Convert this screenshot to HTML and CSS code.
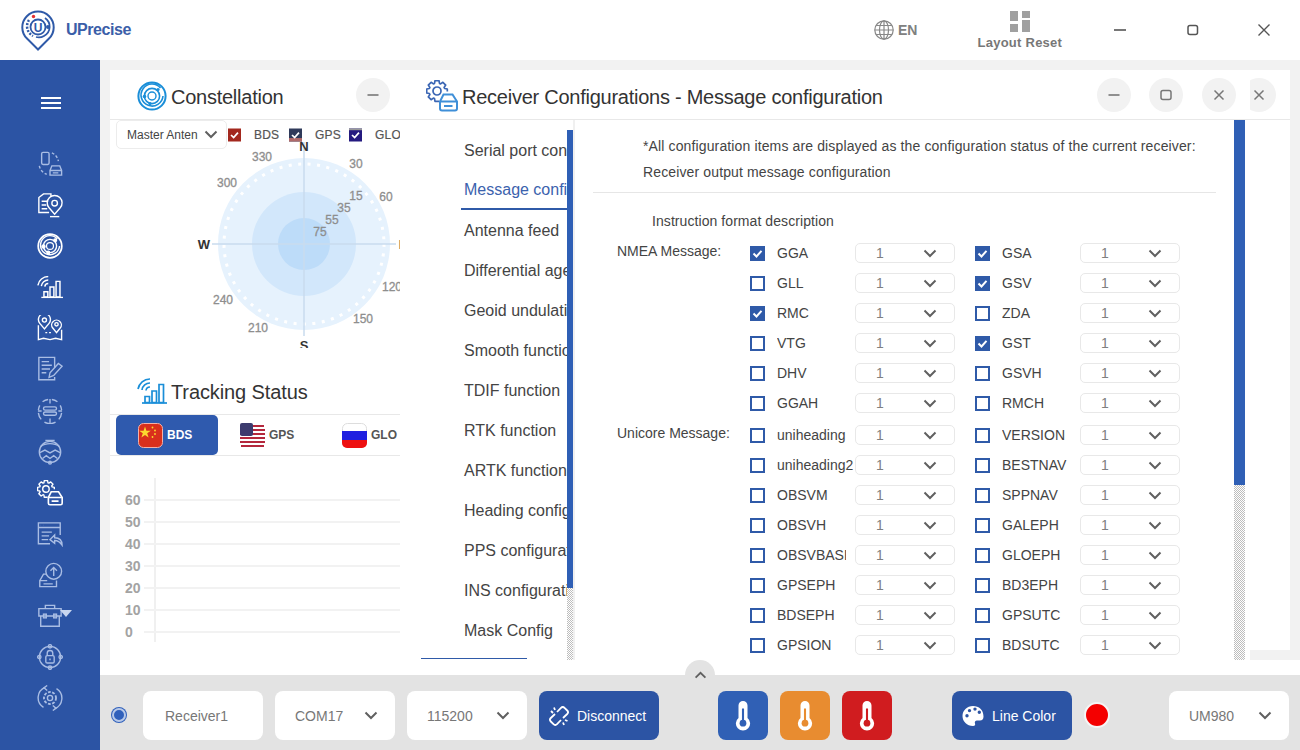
FILE: index.html
```html
<!DOCTYPE html>
<html lang="en">
<head>
<meta charset="utf-8">
<title>UPrecise</title>
<link rel="stylesheet" href="styles.css">
</head>
<body>
<svg class="defs" width="0" height="0" aria-hidden="true">
  <symbol id="chev" viewBox="0 0 14 9"><path d="M1.500 1.500 7 7l5.500-5.500" fill="none" stroke="currentColor" stroke-width="2"/></symbol>
  <symbol id="tick" viewBox="0 0 15 15"><path d="M3.500 7.500 6.500 10.500 11.500 4.800" fill="none" stroke="#fff" stroke-width="2"/></symbol>
  <symbol id="orbit" viewBox="0 0 30 30"><g fill="none" stroke="currentColor"><circle cx="15" cy="15" r="13.600" stroke-width="2"/><path d="M23.500 7A11 11 0 1 0 26 15" stroke-width="1.600"/><circle cx="15" cy="15" r="7.600" stroke-width="1.600"/><circle cx="15" cy="15" r="4" stroke-width="1.400"/></g><circle cx="7.500" cy="15.500" r="1.800" fill="currentColor"/><circle cx="21" cy="8.500" r="1.600" fill="currentColor"/><circle cx="13" cy="22.600" r="1.600" fill="currentColor"/></symbol>
  <symbol id="signal" viewBox="0 0 30 26"><g fill="none" stroke="currentColor" stroke-width="1.700"><path d="M1 11A12 12 0 0 1 13 1"/><path d="M5 12A8 8 0 0 1 13 5"/><path d="M9 12.500A4 4 0 0 1 13 9"/><path d="M8 18.500h4.500v6H8zM15 13h4.500v11.500H15zM22 6.500h4.500v18H22z"/><path d="M5 25h25"/></g></symbol>
  <symbol id="gearbox" viewBox="0 0 32 32">
    <path fill="none" stroke="currentColor" stroke-width="1.700" stroke-linejoin="round" d="M13 21.300H9L8.500 18.600 7.400 18.100 5.100 19.700 2.300 16.900 3.900 14.600 3.400 13.500.7 13V9L3.400 8.500 3.900 7.400 2.300 5.100 5.100 2.300 7.400 3.900 8.500 3.400 9 .7H13L13.500 3.400 14.600 3.900 16.900 2.300 19.700 5.100 18.100 7.400 18.600 8.500 21.300 9V11.500"/>
    <circle cx="11" cy="11" r="4" fill="none" stroke="currentColor" stroke-width="1.700"/>
    <path d="M14 21.500l3.500-7h9l4.500 7v7a2 2 0 0 1-2 2H16a2 2 0 0 1-2-2z" fill="none" stroke="var(--acc, currentColor)" stroke-width="2"/>
    <path d="M14.500 21.500h16M18 26h8.500" stroke="var(--acc, currentColor)" stroke-width="2"/>
  </symbol>
  <symbol id="thermo" viewBox="0 0 24 40"><path d="M6 6a6 6 0 0 1 12 0v16.500a9.500 9.500 0 1 1-12 0z" fill="#fff"/><path d="M12 10v19" stroke="var(--t)" stroke-width="2.800"/><circle cx="12" cy="29.500" r="4.500" fill="var(--t)"/></symbol>
</svg>

<div class="app">
  <header class="top">
    <svg class="logo" viewBox="0 0 34 41" aria-hidden="true">
      <path d="M17 39.500 6 28.500A15.700 15.700 0 1 1 28 28.500z" fill="none" stroke="#2f5aa8" stroke-width="2"/>
      <path d="M8 10A11 11 0 0 0 12 26" fill="none" stroke="#2f5aa8" stroke-width="2.500" stroke-dasharray="2 1.500"/>
      <path d="M24 8A10.500 10.500 0 0 1 23 26 10.500 10.500 0 0 1 15 27" fill="none" stroke="#2f5aa8" stroke-width="1.800"/>
      <circle cx="17" cy="17" r="7.500" fill="none" stroke="#2f5aa8" stroke-width="1.800"/>
      <text x="17" y="21.500" class="logo-u">U</text>
      <circle cx="12.500" cy="6.500" r="1.700" fill="#e53030"/>
      <circle cx="27" cy="17" r="2" fill="#2f5aa8"/>
    </svg>
    <span class="brand">UPrecise</span>
    <div class="lang">
      <svg class="globe" viewBox="0 0 20 20" aria-hidden="true"><g fill="none" stroke="#888" stroke-width="1.200"><circle cx="10" cy="10" r="9.200"/><ellipse cx="10" cy="10" rx="4.500" ry="9.200"/><path d="M10 .8v18.400M.8 10h18.400M2 5.500h16M2 14.500h16"/></g></svg>
      <span>EN</span>
    </div>
    <div class="reset">
      <svg class="reset-icon" viewBox="0 0 20 21" aria-hidden="true"><path d="M0 0h8v10H0zM12 0h8v7h-8zM0 13h8v8H0zM12 9h8v12h-8z" fill="#a0a0a0"/></svg>
      <span>Layout Reset</span>
    </div>
    <div class="win">
      <svg viewBox="0 0 14 14" aria-hidden="true"><path d="M1 7h12" stroke="#555" stroke-width="1.600"/></svg>
      <svg viewBox="0 0 14 14" aria-hidden="true"><rect x="2" y="2.500" width="9.500" height="9" rx="2" fill="none" stroke="#555" stroke-width="1.500"/></svg>
      <svg viewBox="0 0 14 14" aria-hidden="true"><path d="M1.500 1.500l11 11m0-11l-11 11" stroke="#555" stroke-width="1.400"/></svg>
    </div>
  </header>

  <nav class="side">
    <div class="burger"><i></i><i></i><i></i></div>
    <svg class="ico dim" viewBox="0 0 28 28" aria-hidden="true"><rect x="5" y="1.500" width="8" height="13" rx="1.500"/><path d="M16 2a12 12 0 0 1 7 9" stroke-dasharray="3 2"/><path d="M2.500 16a12 12 0 0 0 8 9" stroke-dasharray="3 2"/><path d="M14 21l2-5h8.500l2 5v5h-12.500zM14 21h12.500M17 23.500h6"/></svg>
    <svg class="ico" viewBox="0 0 28 28" aria-hidden="true"><path d="M13 22H2V6l5-4h8v3"/><path d="M5 10h7M5 14h5M5 18h6"/><path d="M19 24l-6-7a8 8 0 1 1 12 0z"/><circle cx="19" cy="12" r="3"/><path d="M14 26.500h10"/></svg>
    <svg class="ico" viewBox="0 0 30 30" aria-hidden="true"><use href="#orbit"/></svg>
    <svg class="ico" viewBox="0 0 30 26" aria-hidden="true"><use href="#signal"/></svg>
    <svg class="ico" viewBox="0 0 28 28" aria-hidden="true"><path d="M8 15l-5-6a6.500 6.500 0 1 1 10 0z"/><circle cx="8" cy="5.500" r="2.200"/><path d="M21 19l-4-5a5.200 5.200 0 1 1 8 0z"/><circle cx="21" cy="10" r="1.800"/><path d="M1.500 11v15.500L7 25l7 1.500L20 25l6.500 1.500V16"/><path d="M9 19h8" stroke-dasharray="2 2"/></svg>
    <svg class="ico dim" viewBox="0 0 28 28" aria-hidden="true"><path d="M19 13V1.500H2v24h17v-3"/><path d="M5 6h8M5 10h11M5 14h9M5 18h5"/><path d="M13 23l1-5 9-10 4 3-9 10z"/></svg>
    <svg class="ico dim" viewBox="0 0 28 28" aria-hidden="true"><path d="M6 4a12.500 12.500 0 0 1 6-2.400M16 1.600A12.500 12.500 0 0 1 22 4M25 8a12.500 12.500 0 0 1 1.500 5M26.500 16a12.500 12.500 0 0 1-3 7M20 26a12.500 12.500 0 0 1-12 0M4.500 23a12.500 12.500 0 0 1-3-7M1.500 13A12.500 12.500 0 0 1 3 8"/><path d="M14 1v5M14 22v5M1 14h4M23 14h4"/><rect x="7" y="9.500" width="14" height="3.500" rx="1.700"/><rect x="7" y="15" width="14" height="3.500" rx="1.700"/></svg>
    <svg class="ico dim" viewBox="0 0 28 28" aria-hidden="true"><circle cx="14" cy="14" r="11.500"/><path d="M4 8c5-4 15-4 20 0M2.500 15l6-3 5.500 3 5.500-3 6 3M6 21l4-3 4 3 4-3 4 3M9 1.500h10"/><circle cx="14" cy="25.500" r="1.500"/></svg>
    <svg class="ico" viewBox="0 0 32 32" aria-hidden="true"><use href="#gearbox"/></svg>
    <svg class="ico dim" viewBox="0 0 28 28" aria-hidden="true"><path d="M25 15V2H1.500v22.500H14"/><path d="M1.500 7H25M4 4.500h.1M7 4.500h.1M5 12h11M5 16h8M5 20h7"/><path d="M27 26c0-5-3-8-8-8v-3l-5 5 5 4v-3c3 0 6 2 8 5z"/></svg>
    <svg class="ico dim" viewBox="0 0 28 28" aria-hidden="true"><circle cx="18" cy="10" r="8.500"/><path d="M18 15V6M14.500 9.500 18 6l3.500 3.500"/><path d="M10 13H7l-4 7v6.500h18V20"/><path d="M3 20h8M7 23.500h10"/></svg>
    <div class="tool">
      <svg class="ico dim" viewBox="0 0 28 28" aria-hidden="true"><path d="M9 6V2.500h10V6M2 6h24v8H2zM4 14v11h20V14"/><rect x="7" y="12" width="3" height="4"/><rect x="18" y="12" width="3" height="4"/></svg>
      <i class="tool-caret"></i>
    </div>
    <svg class="ico dim" viewBox="0 0 28 28" aria-hidden="true"><circle cx="14" cy="14" r="11.500"/><circle cx="14" cy="2.500" r="1.800"/><circle cx="14" cy="25.500" r="1.800"/><circle cx="2.500" cy="14" r="1.800"/><circle cx="25.500" cy="14" r="1.800"/><rect x="9.500" y="12.500" width="9" height="8" rx="1.500"/><path d="M11 12.500V10a3 3 0 0 1 6 0v2.500M14 15.500v2"/></svg>
    <svg class="ico dim" viewBox="0 0 28 28" aria-hidden="true"><path d="M9 2.500A12 12 0 0 0 7 24"/><path d="M19 25.500A12 12 0 0 0 21 4"/><path d="M11 .5 7.500 3 11 6M17 22l3.500 3-3.500 2.500"/><circle cx="14" cy="14" r="2.800"/><circle cx="14" cy="14" r="6.500" stroke-dasharray="3 1.600" stroke-width="2"/></svg>
  </nav>

  <main class="main">
    <div class="work">
    <div class="dock">
      <div class="panel">
        <section class="left">
          <div class="head">
            <svg class="head-ico blue" viewBox="0 0 30 30" aria-hidden="true"><use href="#orbit"/></svg>
            <h2>Constellation</h2>
            <button class="circle c-min" type="button" aria-label="Minimize"><svg viewBox="0 0 14 14"><path d="M1.500 7h11" stroke="#777" stroke-width="1.600"/></svg></button>
          </div>
          <div class="toolbar">
            <div class="ant"><span>Master Anten</span><svg class="chev" aria-hidden="true"><use href="#chev"/></svg></div>
            <div class="legend w61"><svg class="lbox" viewBox="0 0 15 15" aria-hidden="true"><rect width="15" height="15" fill="#a3281e"/><use href="#tick"/></svg><span>BDS</span></div>
            <div class="legend w60"><svg class="lbox" viewBox="0 0 15 15" aria-hidden="true"><rect width="15" height="15" fill="#2f3a5a"/><rect y="11" width="15" height="4" fill="#b06a6a"/><use href="#tick"/></svg><span>GPS</span></div>
            <div class="legend"><svg class="lbox" viewBox="0 0 15 15" aria-hidden="true"><rect width="15" height="15" fill="#241a80"/><rect width="15" height="2" fill="#999"/><use href="#tick"/></svg><span>GLO</span></div>
          </div>
          <svg class="radar" viewBox="110 135 290 213" aria-hidden="true">
            <circle cx="304" cy="244" r="86" fill="#e6f2fd"/>
            <circle cx="304" cy="244" r="80" fill="none" stroke="#fff" stroke-width="3" stroke-dasharray="3 6.500"/>
            <circle cx="304" cy="244" r="52" fill="#d2e7fb"/>
            <circle cx="304" cy="244" r="26" fill="#bddcf9"/>
            <path d="M304 142v194M212 244h184" stroke="#c9dcee" stroke-width="1.500"/>
            <g class="rdeg">
              <text x="262" y="161">330</text><text x="356" y="168">30</text><text x="227" y="187">300</text>
              <text x="356" y="200">15</text><text x="386" y="201">60</text><text x="344" y="212">35</text>
              <text x="332" y="224">55</text><text x="320" y="236">75</text><text x="223" y="304">240</text>
              <text x="392" y="291">120</text><text x="363" y="323">150</text><text x="258" y="332">210</text>
            </g>
            <g class="rdir"><text x="304" y="151">N</text><text x="204" y="249">W</text><text x="403" y="249">E</text><text x="304" y="350">S</text></g>
          </svg>
          <div class="head thead">
            <svg class="head-ico blue" viewBox="0 0 30 26" aria-hidden="true"><use href="#signal"/></svg>
            <h2>Tracking Status</h2>
          </div>
          <div class="tabs">
            <div class="tab on">
              <svg class="flag" viewBox="0 0 25 25" aria-hidden="true"><rect x=".5" y=".5" width="24" height="24" rx="5" fill="#d92f1c" stroke="#f3b0a8"/><path d="m7 3.500 1.400 4.200h4.400l-3.600 2.600 1.400 4.200L7 11.900l-3.600 2.600 1.400-4.200-3.600-2.600h4.400z" fill="#fbd92f"/><g fill="#fbd92f"><circle cx="14.500" cy="4.500" r=".9"/><circle cx="17" cy="7.500" r=".9"/><circle cx="17" cy="11" r=".9"/><circle cx="14.500" cy="14" r=".9"/></g></svg>
              <span>BDS</span>
            </div>
            <div class="tab">
              <svg class="flag" viewBox="0 0 25 25" aria-hidden="true"><rect width="25" height="25" rx="5" fill="#fff"/><path d="M1 3h23M0 7h25M0 11h25M0 15h25M0 19h25M1 23h23" stroke="#b4283c" stroke-width="2"/><rect width="13" height="13" rx="2" fill="#3c3b6e"/></svg>
              <span>GPS</span>
            </div>
            <div class="tab">
              <svg class="flag" viewBox="0 0 25 25" aria-hidden="true"><rect x=".5" y=".5" width="24" height="24" rx="5" fill="#fff" stroke="#ddd"/><rect y="8" width="25" height="9" fill="#1f1fe0"/><path d="M0 17h25v3a5 5 0 0 1-5 5H5a5 5 0 0 1-5-5z" fill="#ee1010"/></svg>
              <span>GLO</span>
            </div>
          </div>
          <svg class="chart" viewBox="110 456 290 203" aria-hidden="true">
            <path d="M155 478v164" stroke="#f0f0f0" stroke-width="2"/>
            <path d="M144 500h256M144 522h256M144 544h256M144 566h256M144 588h256M144 610h256M144 632h256" stroke="#f2f2f2" stroke-width="2"/>
            <g class="axis"><text x="125" y="505">60</text><text x="125" y="527">50</text><text x="125" y="549">40</text><text x="125" y="571">30</text><text x="125" y="593">20</text><text x="125" y="615">10</text><text x="125" y="637">0</text></g>
          </svg>
        </section>

        <section class="config">
          <div class="head chead">
            <svg class="cfg-ico" viewBox="0 0 32 32" aria-hidden="true"><use href="#gearbox"/></svg>
            <h2>Receiver Configurations - Message configuration</h2>
            <button class="circle" type="button" aria-label="Minimize"><svg viewBox="0 0 14 14"><path d="M1.500 7h11" stroke="#777" stroke-width="1.600"/></svg></button>
            <button class="circle" type="button" aria-label="Maximize"><svg viewBox="0 0 14 14"><rect x="2" y="2.500" width="10" height="9" rx="2" fill="none" stroke="#777" stroke-width="1.500"/></svg></button>
            <button class="circle" type="button" aria-label="Close"><svg viewBox="0 0 14 14"><path d="M2.500 2.500l9 9m0-9l-9 9" stroke="#777" stroke-width="1.500"/></svg></button>
            <div class="cut"><button class="circle" type="button" aria-label="Close"><svg viewBox="0 0 14 14"><path d="M2.500 2.500l9 9m0-9l-9 9" stroke="#777" stroke-width="1.500"/></svg></button></div>
          </div>
          <div class="cbody">
            <div class="cnav">
              <ul class="navlist">
                <li>Serial port configuration</li>
                <li class="on">Message configuration</li>
                <li>Antenna feed</li>
                <li>Differential age</li>
                <li>Geoid undulation</li>
                <li>Smooth function</li>
                <li>TDIF function</li>
                <li>RTK function</li>
                <li>ARTK function</li>
                <li>Heading configuration</li>
                <li>PPS configuration</li>
                <li>INS configuration</li>
                <li>Mask Config</li>
              </ul>
              <div class="hthumb"></div>
            </div>
            <div class="vbar navbar"><i class="pad"></i><i class="thumb nthumb"></i><i class="dither"></i></div>
            <div class="content">
              <p class="note">*All configuration items are displayed as the configuration status of the current receiver:</p>
              <p class="note">Receiver output message configuration</p>
              <hr class="rule">
              <p class="instr">Instruction format description</p>

              <div class="group">
                <div class="glabel">NMEA Message:</div>
                <div class="grid">
                  <div class="item"><span class="cb on"><svg viewBox="0 0 15 15" aria-hidden="true"><use href="#tick"/></svg></span><span class="name">GGA</span><span class="sel">1<svg class="chev" aria-hidden="true"><use href="#chev"/></svg></span></div>
                  <div class="item"><span class="cb on"><svg viewBox="0 0 15 15" aria-hidden="true"><use href="#tick"/></svg></span><span class="name">GSA</span><span class="sel">1<svg class="chev" aria-hidden="true"><use href="#chev"/></svg></span></div>
                  <div class="item"><span class="cb"></span><span class="name">GLL</span><span class="sel">1<svg class="chev" aria-hidden="true"><use href="#chev"/></svg></span></div>
                  <div class="item"><span class="cb on"><svg viewBox="0 0 15 15" aria-hidden="true"><use href="#tick"/></svg></span><span class="name">GSV</span><span class="sel">1<svg class="chev" aria-hidden="true"><use href="#chev"/></svg></span></div>
                  <div class="item"><span class="cb on"><svg viewBox="0 0 15 15" aria-hidden="true"><use href="#tick"/></svg></span><span class="name">RMC</span><span class="sel">1<svg class="chev" aria-hidden="true"><use href="#chev"/></svg></span></div>
                  <div class="item"><span class="cb"></span><span class="name">ZDA</span><span class="sel">1<svg class="chev" aria-hidden="true"><use href="#chev"/></svg></span></div>
                  <div class="item"><span class="cb"></span><span class="name">VTG</span><span class="sel">1<svg class="chev" aria-hidden="true"><use href="#chev"/></svg></span></div>
                  <div class="item"><span class="cb on"><svg viewBox="0 0 15 15" aria-hidden="true"><use href="#tick"/></svg></span><span class="name">GST</span><span class="sel">1<svg class="chev" aria-hidden="true"><use href="#chev"/></svg></span></div>
                  <div class="item"><span class="cb"></span><span class="name">DHV</span><span class="sel">1<svg class="chev" aria-hidden="true"><use href="#chev"/></svg></span></div>
                  <div class="item"><span class="cb"></span><span class="name">GSVH</span><span class="sel">1<svg class="chev" aria-hidden="true"><use href="#chev"/></svg></span></div>
                  <div class="item"><span class="cb"></span><span class="name">GGAH</span><span class="sel">1<svg class="chev" aria-hidden="true"><use href="#chev"/></svg></span></div>
                  <div class="item"><span class="cb"></span><span class="name">RMCH</span><span class="sel">1<svg class="chev" aria-hidden="true"><use href="#chev"/></svg></span></div>
                </div>
              </div>

              <div class="group g2">
                <div class="glabel">Unicore Message:</div>
                <div class="grid">
                  <div class="item"><span class="cb"></span><span class="name short">uniheading</span><span class="sel">1<svg class="chev" aria-hidden="true"><use href="#chev"/></svg></span></div>
                  <div class="item"><span class="cb"></span><span class="name">VERSION</span><span class="sel">1<svg class="chev" aria-hidden="true"><use href="#chev"/></svg></span></div>
                  <div class="item"><span class="cb"></span><span class="name">uniheading2</span><span class="sel">1<svg class="chev" aria-hidden="true"><use href="#chev"/></svg></span></div>
                  <div class="item"><span class="cb"></span><span class="name">BESTNAV</span><span class="sel">1<svg class="chev" aria-hidden="true"><use href="#chev"/></svg></span></div>
                  <div class="item"><span class="cb"></span><span class="name">OBSVM</span><span class="sel">1<svg class="chev" aria-hidden="true"><use href="#chev"/></svg></span></div>
                  <div class="item"><span class="cb"></span><span class="name">SPPNAV</span><span class="sel">1<svg class="chev" aria-hidden="true"><use href="#chev"/></svg></span></div>
                  <div class="item"><span class="cb"></span><span class="name">OBSVH</span><span class="sel">1<svg class="chev" aria-hidden="true"><use href="#chev"/></svg></span></div>
                  <div class="item"><span class="cb"></span><span class="name">GALEPH</span><span class="sel">1<svg class="chev" aria-hidden="true"><use href="#chev"/></svg></span></div>
                  <div class="item"><span class="cb"></span><span class="name short">OBSVBASE</span><span class="sel">1<svg class="chev" aria-hidden="true"><use href="#chev"/></svg></span></div>
                  <div class="item"><span class="cb"></span><span class="name">GLOEPH</span><span class="sel">1<svg class="chev" aria-hidden="true"><use href="#chev"/></svg></span></div>
                  <div class="item"><span class="cb"></span><span class="name">GPSEPH</span><span class="sel">1<svg class="chev" aria-hidden="true"><use href="#chev"/></svg></span></div>
                  <div class="item"><span class="cb"></span><span class="name">BD3EPH</span><span class="sel">1<svg class="chev" aria-hidden="true"><use href="#chev"/></svg></span></div>
                  <div class="item"><span class="cb"></span><span class="name">BDSEPH</span><span class="sel">1<svg class="chev" aria-hidden="true"><use href="#chev"/></svg></span></div>
                  <div class="item"><span class="cb"></span><span class="name">GPSUTC</span><span class="sel">1<svg class="chev" aria-hidden="true"><use href="#chev"/></svg></span></div>
                  <div class="item"><span class="cb"></span><span class="name">GPSION</span><span class="sel">1<svg class="chev" aria-hidden="true"><use href="#chev"/></svg></span></div>
                  <div class="item"><span class="cb"></span><span class="name">BDSUTC</span><span class="sel">1<svg class="chev" aria-hidden="true"><use href="#chev"/></svg></span></div>
                </div>
              </div>
            </div>
            <div class="vbar mainbar"><i class="thumb mthumb"></i><i class="dither"></i></div>
            <div class="blank"><i class="fill"></i><i class="strip"></i></div>
          </div>
        </section>
      </div>
    </div>
    </div>

    <footer class="bar">
      <div class="pull"><svg class="chev" aria-hidden="true"><use href="#chev"/></svg></div>
      <span class="radio"></span>
      <div class="box b-rec">Receiver1</div>
      <div class="box">COM17<svg class="chev" aria-hidden="true"><use href="#chev"/></svg></div>
      <div class="box">115200<svg class="chev" aria-hidden="true"><use href="#chev"/></svg></div>
      <button class="btn" type="button">
        <svg viewBox="0 0 20 20" aria-hidden="true"><g fill="none" stroke="#fff" stroke-width="1.800"><path d="M8 6l4-4.200a2.500 2.500 0 0 1 3.500 0l2.700 2.700a2.500 2.500 0 0 1 0 3.500L14 12"/><path d="M12 14l-4 4.200a2.500 2.500 0 0 1-3.500 0l-2.700-2.700a2.500 2.500 0 0 1 0-3.500L6 8"/><path d="M2 5l2 2M5 1.500l1 2.500M15 19l-1-2.500M18.500 15l-2.500-1"/></g></svg>
        Disconnect
      </button>
      <div class="temps">
        <span class="temp t-blue"><svg viewBox="0 0 24 40" aria-hidden="true"><use href="#thermo"/></svg></span>
        <span class="temp t-orange"><svg viewBox="0 0 24 40" aria-hidden="true"><use href="#thermo"/></svg></span>
        <span class="temp t-red"><svg viewBox="0 0 24 40" aria-hidden="true"><use href="#thermo"/></svg></span>
      </div>
      <button class="btn b-line" type="button">
        <svg viewBox="0 0 22 22" aria-hidden="true"><path fill-rule="evenodd" fill="#fff" d="M11 1C5 1 .5 5.500.5 11S5 21 11 21c2 0 2.500-1.300 2-2.500-.6-1.500.2-3 2-3h3c2.300 0 3.500-1.500 3.500-4C21.500 5 17 1 11 1zM5 12.500a1.700 1.700 0 1 1 0-3.400 1.700 1.700 0 0 1 0 3.400zM7.500 7.300a1.700 1.700 0 1 1 0-3.400 1.700 1.700 0 0 1 0 3.400zM13 5.800a1.700 1.700 0 1 1 0-3.400 1.700 1.700 0 0 1 0 3.400zM17.300 9a1.700 1.700 0 1 1 0-3.400 1.700 1.700 0 0 1 0 3.400z"/></svg>
        Line Color
      </button>
      <span class="dot"></span>
      <div class="box b-um">UM980<svg class="chev" aria-hidden="true"><use href="#chev"/></svg></div>
    </footer>
  </main>
</div>
</body>
</html>
```
FILE: styles.css
```css
* { box-sizing: border-box; }
html, body { margin: 0; padding: 0; }
body { font-family: "Liberation Sans", Arial, sans-serif; color: #333; background: #fff; }
.defs { position: absolute; }
i { display: block; }
p { margin: 0; }
ul { margin: 0; padding: 0; list-style: none; }
h2 { margin: 6px 0 0; font-size: 20px; font-weight: 400; color: #333; white-space: nowrap; letter-spacing: -.25px; }
button { font-family: inherit; border: 0; padding: 0; }

.app { width: 1300px; height: 750px; overflow: hidden; display: grid; grid-template-columns: 100px 1fr; grid-template-rows: 60px 1fr; }

/* top bar */
.top { grid-column: 1 / -1; display: flex; align-items: center; background: #fff; padding-left: 21px; }
.logo { width: 34px; height: 41px; }
.logo-u { font: 700 12px "Liberation Sans", sans-serif; fill: #2f5aa8; text-anchor: middle; }
.brand { margin-left: 11px; font-size: 16px; font-weight: 700; color: #3b5ea8; letter-spacing: -.45px; }
.lang { margin-left: 743px; display: flex; align-items: center; gap: 4px; font-size: 14px; font-weight: 700; color: #808080; }
.globe { width: 20px; height: 20px; }
.reset { margin-left: 60px; width: 85px; display: flex; flex-direction: column; align-items: center; gap: 3px; font-size: 13px; font-weight: 700; color: #777; white-space: nowrap; padding-top: 1px; letter-spacing: .25px; }
.reset-icon { width: 20px; height: 21px; display: block; }
.win { margin-left: 51px; display: flex; gap: 57px; }
.win svg { width: 14px; height: 14px; display: block; }
.win svg:nth-child(2) { margin-left: 2px; }

/* sidebar */
.side { background: #2c54a4; color: #fff; display: flex; flex-direction: column; align-items: center; padding-top: 37px; }
.burger { width: 20px; height: 12px; display: flex; flex-direction: column; justify-content: space-between; margin-bottom: 42px; margin-left: 2px; }
.burger i { height: 2px; background: #fff; }
.ico { width: 26px; height: 26px; margin-bottom: 15.100px; fill: none; stroke: currentColor; stroke-width: 1.500; color: #fff; display: block; flex: none; }
.ico.dim { color: #a9bde4; }
.tool { position: relative; height: 41.100px; }
.tool-caret { position: absolute; left: 23px; top: 7px; width: 0; height: 0; border-left: 6px solid transparent; border-right: 6px solid transparent; border-top: 7px solid #c9d6ef; }

/* main */
.main { display: flex; flex-direction: column; min-width: 0; background: #fff; }
.work { height: 615px; flex: none; }
.dock { height: 600px; background: #f2f2f2; padding: 10px 10px 0; }
.panel { height: 590px; background: #fff; display: flex; }
.left { width: 310px; flex: none; }
.head { height: 50px; display: flex; align-items: center; border-bottom: 1px solid #e8e8e8; padding-left: 27px; }
.head-ico { width: 30px; height: 30px; margin-right: 4px; margin-top: 3px; display: block; }
.blue { color: #1a8ed8; }
.circle { width: 34px; height: 34px; border-radius: 50%; background: #f2f2f2; display: flex; align-items: center; justify-content: center; flex: none; }
.circle svg { width: 14px; height: 14px; display: block; }
.c-min { margin-left: 73px; margin-top: 1px; }

.toolbar { width: 290px; height: 30px; padding-left: 6px; display: flex; align-items: center; overflow: hidden; }
.ant { width: 111px; height: 29px; margin-top: -1px; background: #fff; border: 1px solid #ececec; border-radius: 5px; font-size: 12px; color: #444; display: flex; align-items: center; justify-content: space-between; padding: 0 8px 0 10px; white-space: nowrap; flex: none; }
.chev { width: 14px; height: 9px; color: #606060; display: block; flex: none; }
.legend { display: flex; align-items: center; gap: 13px; font-size: 12px; color: #555; letter-spacing: .2px; margin-left: 1px; flex: none; }
.legend span { -webkit-text-stroke: .2px #555; }
.legend.w61 { width: 60px; }
.legend.w60 { width: 59px; }
.lbox { width: 13px; height: 14px; display: block; }
.radar { display: block; width: 290px; height: 213px; margin-top: -15px; }
.rdeg text { font-size: 12px; fill: #8e8e8e; text-anchor: middle; stroke: #8e8e8e; stroke-width: .3px; }
.rdir text { font-size: 13px; font-weight: 700; fill: #333; text-anchor: middle; }

.thead { height: 67px; width: 290px; align-items: flex-end; padding-bottom: 10px; }
.thead h2 { margin-top: 0; letter-spacing: -.1px; }
.thead .head-ico { height: 26px; margin-top: 0; margin-bottom: 0; }
.tabs { width: 290px; height: 41px; padding-left: 6px; border-bottom: 1px solid #e8e8e8; display: flex; overflow: hidden; }
.tab { width: 102px; height: 40px; flex: none; display: flex; align-items: center; padding-left: 22px; gap: 4px; font-size: 12px; font-weight: 700; color: #555; border-radius: 5px; }
.tab.on { background: #2f5aae; color: #fff; }
.flag { width: 25px; height: 25px; display: block; flex: none; }
.chart { display: block; width: 290px; height: 203px; }
.axis text { font-size: 14px; font-weight: 700; fill: #a3a3a3; }

/* config */
.config { flex: 1; min-width: 0; display: flex; flex-direction: column; }
.chead { padding-left: 6px; flex: none; }
.cfg-ico { width: 32px; height: 32px; color: #3b66b4; --acc: #3f8fd8; margin-right: 4px; margin-top: 3px; display: block; }
.chead h2 { width: 635px; }
.chead .circle { margin-top: 1px; margin-right: 18px; }
.chead .circle + .circle { margin-right: 19px; }
.cut { width: 26px; overflow: hidden; margin-left: -5px; margin-top: 1px; }
.cut .circle { margin: 0 0 0 -8px; }
.cbody { flex: 1; min-height: 0; display: flex; }
.cnav { width: 147px; flex: none; display: flex; flex-direction: column; overflow: hidden; }
.navlist { flex: 1; padding-top: 10px; padding-left: 41px; overflow: hidden; }
.navlist li { height: 40px; line-height: 42px; padding-left: 3px; font-size: 16px; color: #444; white-space: nowrap; overflow: hidden; }
.navlist li.on { color: #3b62ad; border-bottom: 2px solid #2f5aa8; line-height: 40px; }
.hthumb { height: 1px; width: 106px; margin-left: 1px; margin-bottom: 1px; background: #2f5aa8; flex: none; }

.vbar { display: flex; flex-direction: column; flex: none; }
.vbar .pad { height: 10px; flex: none; }
.thumb { background: #2f5fb5; flex: none; }
.dither { flex: 1; background: repeating-conic-gradient(#bdbdbd 0 25%, #fff 0 50%) 0 0 / 2px 2px; }
.navbar { width: 8px; border-right: 2px solid #f0f0f0; }
.nthumb { height: 458px; }
.mainbar { width: 11px; }
.mthumb { height: 365px; }

.content { width: 659px; flex: none; overflow: hidden; padding-top: 13px; font-size: 14px; color: #444; }
.note { height: 26px; line-height: 26px; margin-left: 68px; white-space: nowrap; letter-spacing: .13px; }
.rule { border: 0; height: 1px; background: #e6e6e6; margin: 7px 18px 0; width: 623px; }
.instr { height: 45px; line-height: 57px; margin-left: 77px; letter-spacing: .07px; }
.group { display: flex; padding-left: 42px; }
.g2 { margin-top: 2px; }
.glabel { width: 133px; height: 26px; line-height: 26px; flex: none; white-space: nowrap; }
.grid { display: grid; grid-template-columns: 225px 225px; grid-auto-rows: 30px; }
.item { display: flex; align-items: center; }
.cb { width: 15px; height: 15px; border: 2px solid #2f5aa8; background: #fff; flex: none; display: block; }
.cb.on { background: #2f5aa8; border: 0; }
.cb svg { width: 15px; height: 15px; display: block; }
.name { margin-left: 12px; width: 78px; flex: none; overflow: hidden; white-space: nowrap; color: #444; }
.name.short { width: 69px; margin-right: 9px; }
.sel { width: 100px; height: 20px; border: 1px solid #e8e8e8; border-radius: 5px; background: #fff; display: flex; align-items: center; padding-left: 20px; color: #808080; flex: none; }
.sel .chev { margin-left: 39px; }

.blank { flex: 1; display: flex; flex-direction: column; }
.blank .fill { flex: 1; }
.blank .strip { height: 10px; background: #f2f2f2; margin-left: 5px; margin-right: -10px; flex: none; }

/* bottom bar */
.bar { flex: 1; background: #e3e3e3; display: flex; align-items: flex-start; padding: 16px 0 0 12px; position: relative; }
.pull { position: absolute; left: 585px; top: -15px; width: 30px; height: 30px; border-radius: 50%; background: #e3e3e3; display: flex; justify-content: center; padding-top: 11px; }
.pull .chev { transform: scaleY(-1); width: 13px; height: 8px; }
.radio { width: 14px; height: 14px; border-radius: 50%; background: #3060bb; box-shadow: inset 0 0 0 2px #b8c9e8, 0 0 0 1px #3060bb; margin: 17px 17px 0 0; flex: none; }
.box { width: 120px; height: 49px; background: #fff; border-radius: 8px; display: flex; align-items: center; justify-content: space-between; padding: 0 17px 0 20px; margin-right: 12px; font-size: 14px; color: #777; flex: none; }
.b-rec { padding-left: 22px; }
.btn { width: 120px; height: 49px; border-radius: 8px; background: #2c54a4; color: #fff; font-size: 14px; display: flex; align-items: center; padding-left: 10px; gap: 8px; flex: none; }
.btn svg { width: 20px; height: 20px; display: block; flex: none; }
.temps { display: flex; gap: 12px; margin-left: 59px; }
.temp { width: 50px; height: 49px; border-radius: 8px; display: flex; align-items: center; justify-content: center; }
.temp svg { width: 18px; height: 30px; display: block; }
.t-blue { background: #3060b5; --t: #3060b5; }
.t-orange { background: #e88c30; --t: #e88c30; }
.t-red { background: #d01c1f; --t: #d01c1f; }
.b-line { margin-left: 60px; padding-left: 10px; gap: 8px; }
.b-line svg { width: 22px; height: 22px; }
.dot { width: 26px; height: 26px; border-radius: 50%; background: #f40000; border: 2px solid #f5f5f5; margin: 11px 0 0 12px; flex: none; }
.b-um { margin: 0 0 0 59px; padding-right: 17px; }
```
